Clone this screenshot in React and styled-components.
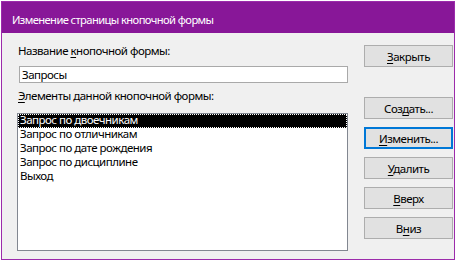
import React from "react";
import styled, { createGlobalStyle } from "styled-components";

const GlobalStyle = createGlobalStyle`
  html, body {
    margin: 0;
    padding: 0;
    background: #ffffff;
  }
  body {
    font-family: "Noto Sans", "Open Sans", sans-serif;
    font-size: 11.5px;
    letter-spacing: -0.5px;
    color: #000;
  }
`;

const Page = styled.div`
  padding: 1px 0 0 1px;
`;

const Window = styled.div`
  width: 452px;
  height: 257px;
  border: 1px solid #9c2bab;
  background: #f0f0f0;
  display: flex;
  flex-direction: column;
  overflow: hidden;
`;

const TitleBar = styled.div`
  height: 31px;
  flex: none;
  background: #881798;
  color: #ffffff;
  font-size: 11.2px;
  letter-spacing: -0.6px;
  display: flex;
  align-items: center;
  padding-left: 10px;
  padding-top: 3px;
  box-sizing: border-box;
`;

const Body = styled.div`
  flex: 1;
  display: flex;
  flex-direction: row;
  padding: 0 0 0 15px;
`;

const LeftColumn = styled.div`
  width: 331px;
  display: flex;
  flex-direction: column;
  padding-top: 10px;
`;

const Label = styled.div`
  height: 16px;
  line-height: 16px;
  padding-left: 1px;
  margin-top: ${(p) => p.$gap || 0}px;
`;

const Key = styled.span`
  text-decoration: underline;
  text-underline-offset: 2px;
`;

const TextBox = styled.input`
  display: block;
  margin: 7px 0 0 2px;
  width: 329px;
  height: 17px;
  box-sizing: border-box;
  border: 1px solid #a9a9a9;
  background: #ffffff;
  padding: 0 2px;
  font: inherit;
  letter-spacing: -0.5px;
  outline: none;
`;

const ListBox = styled.ul`
  list-style: none;
  margin: 9px 0 0 0;
  padding: 0;
  width: 331px;
  height: 138px;
  box-sizing: border-box;
  border: 1px solid #828790;
  background: #ffffff;
`;

const ListItem = styled.li`
  height: 14px;
  line-height: 11px;
  padding-left: 2px;
  box-sizing: border-box;
  white-space: nowrap;
  background: ${(p) => (p.$selected ? "#000000" : "transparent")};
  color: ${(p) => (p.$selected ? "#ffffff" : "#000000")};
  outline: ${(p) => (p.$selected ? "1px dotted #ffffff" : "none")};
  outline-offset: -1px;
`;

const RightColumn = styled.div`
  display: flex;
  flex-direction: column;
  margin-left: 16px;
  padding-top: 12px;
`;

const Button = styled.div`
  width: 89px;
  height: 22px;
  flex: none;
  box-sizing: border-box;
  border: ${(p) => (p.$focused ? "2px solid #0078d7" : "1px solid #adadad")};
  background: #e1e1e1;
  display: flex;
  align-items: center;
  justify-content: center;
  margin-top: ${(p) => p.$gap}px;
`;

const items = [
  "Запрос по двоечникам",
  "Запрос по отличникам",
  "Запрос по дате рождения",
  "Запрос по дисциплине",
  "Выход",
];

export default function App() {
  return (
    <Page>
      <GlobalStyle />
      <Window>
        <TitleBar>Изменение страницы кнопочной формы</TitleBar>
        <Body>
          <LeftColumn>
            <Label>
              Название <Key>к</Key>нопочной формы:
            </Label>
            <TextBox defaultValue="Запросы" />
            <Label $gap={5}>
              <Key>Э</Key>лементы данной кнопочной формы:
            </Label>
            <ListBox>
              {items.map((item, i) => (
                <ListItem key={item} $selected={i === 0}>
                  {item}
                </ListItem>
              ))}
            </ListBox>
          </LeftColumn>
          <RightColumn>
            <Button $gap={0}>
              <span>
                <Key>З</Key>акрыть
              </span>
            </Button>
            <Button $gap={30}>
              <span>
                Соз<Key>д</Key>ать...
              </span>
            </Button>
            <Button $gap={8} $focused>
              <span>
                <Key>И</Key>зменить...
              </span>
            </Button>
            <Button $gap={8}>
              <span>
                <Key>У</Key>далить
              </span>
            </Button>
            <Button $gap={8}>
              <span>
                <Key>В</Key>верх
              </span>
            </Button>
            <Button $gap={8}>
              <span>
                В<Key>н</Key>из
              </span>
            </Button>
          </RightColumn>
        </Body>
      </Window>
    </Page>
  );
}
